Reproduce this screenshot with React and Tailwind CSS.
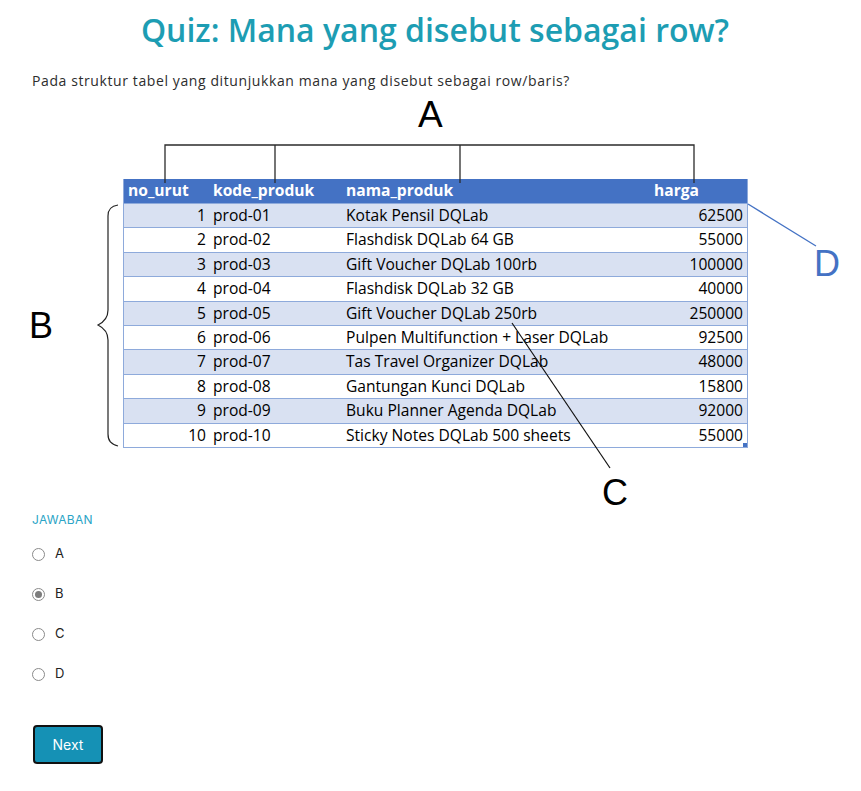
const rows = [
  [1, 'prod-01', 'Kotak Pensil DQLab', 62500],
  [2, 'prod-02', 'Flashdisk DQLab 64 GB', 55000],
  [3, 'prod-03', 'Gift Voucher DQLab 100rb', 100000],
  [4, 'prod-04', 'Flashdisk DQLab 32 GB', 40000],
  [5, 'prod-05', 'Gift Voucher DQLab 250rb', 250000],
  [6, 'prod-06', 'Pulpen Multifunction + Laser DQLab', 92500],
  [7, 'prod-07', 'Tas Travel Organizer DQLab', 48000],
  [8, 'prod-08', 'Gantungan Kunci DQLab', 15800],
  [9, 'prod-09', 'Buku Planner Agenda DQLab', 92000],
  [10, 'prod-10', 'Sticky Notes DQLab 500 sheets', 55000],
];

const options = ['A', 'B', 'C', 'D'];

function ProductTable() {
  return (
    <div className="relative w-[625px] ml-[91px] border-x border-b border-[#8eaadb] font-['Open_Sans',sans-serif] text-[15.6px] text-black">
      <div className="flex h-[24px] items-center bg-[#4472c4] font-bold text-white">
        <div className="w-[85px] pl-[4px]">no_urut</div>
        <div className="w-[133px] pl-[4px]">kode_produk</div>
        <div className="w-[308px] pl-[4px]">nama_produk</div>
        <div className="flex-1 pl-[4px]">harga</div>
      </div>
      {rows.map(([no, kode, nama, harga], i) => (
        <div
          key={no}
          className={`flex h-[24.4px] items-center border-t border-[#8eaadb] ${i % 2 === 0 ? 'bg-[#d9e1f2]' : 'bg-white'}`}
        >
          <div className="w-[85px] pr-[3px] text-right">{no}</div>
          <div className="w-[133px] pl-[4px]">{kode}</div>
          <div className="w-[308px] pl-[4px] whitespace-nowrap">{nama}</div>
          <div className="flex-1 pr-[4px] text-right">{harga}</div>
        </div>
      ))}
      <div className="absolute right-0 bottom-0 w-[4px] h-[4px] bg-[#4472c4]" />
    </div>
  );
}

function Figure() {
  return (
    <div className="relative mt-[5px] h-[415px] pt-[84px]">
      <ProductTable />
      <svg
        className="absolute top-0 left-[-32px] pointer-events-none overflow-visible"
        width="861"
        height="430"
        viewBox="0 95 861 430"
        fontFamily="'Liberation Sans', sans-serif"
      >
        <path d="M165 183V145H694V183M275 145V183M460 145V183" fill="none" stroke="#2b2b2b" strokeWidth="1.3" />
        <path
          d="M118 205C111 206 108 209 108 216V310C108 318 104 322 98 325C104 328 108 332 108 340V434C108 441 111 444 118 446"
          fill="none"
          stroke="#222"
          strokeWidth="1.2"
        />
        <line x1="748" y1="204" x2="816" y2="246" stroke="#4472c4" strokeWidth="1.3" />
        <line x1="512" y1="323" x2="610" y2="468" stroke="#111" strokeWidth="1.2" />
        <text x="418" y="127" fontSize="37" fill="#000">A</text>
        <text x="29" y="338" fontSize="36" fill="#000">B</text>
        <text x="602" y="505" fontSize="36" fill="#000">C</text>
        <text x="814" y="276" fontSize="36" fill="#4472c4">D</text>
      </svg>
    </div>
  );
}

export default function App() {
  const selected = 'B';

  return (
    <div className="min-h-screen bg-white px-8 pt-[10px] pb-8 font-['Open_Sans',sans-serif] text-[#333]">
      <h1 className="pl-[9px] text-center text-[32px] leading-[40px] font-semibold text-[#1d9db3]">
        Quiz: Mana yang disebut sebagai row?
      </h1>
      <p className="mt-[22px] text-[14px] leading-[18px] tracking-[0.6px] text-[#2d2d2d]">
        Pada struktur tabel yang ditunjukkan mana yang disebut sebagai row/baris?
      </p>

      <Figure />

      <div className="font-['Inter',sans-serif]">
        <div className="mt-[1px] text-[12px] tracking-[0.3px] text-[#2ba4c6]">JAWABAN</div>
        <div className="mt-[5px] flex flex-col">
          {options.map((opt) => (
            <label key={opt} className="flex h-[40px] items-center gap-[10px] text-[13px] text-[#222]">
              <span className="flex h-[13px] w-[13px] items-center justify-center rounded-full border border-[#8a8a8a] bg-white">
                {opt === selected && <span className="h-[7px] w-[7px] rounded-full bg-[#7d7d7d]" />}
              </span>
              {opt}
            </label>
          ))}
        </div>
        <button className="mt-[31px] ml-px h-[39px] w-[70px] rounded-[4px] border-2 border-[#111] bg-[#1591b5] text-[14px] text-white">
          Next
        </button>
      </div>
    </div>
  );
}
